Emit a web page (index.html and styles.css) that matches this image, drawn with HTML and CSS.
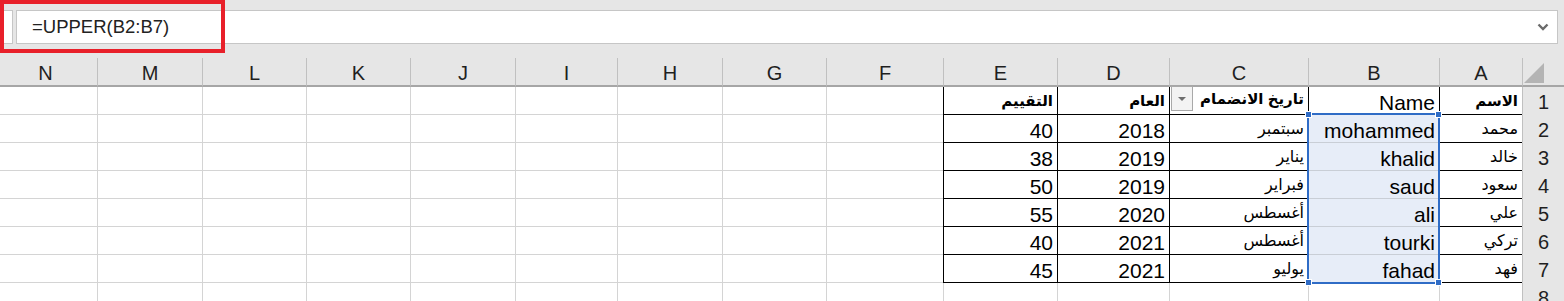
FILE: index.html
```html
<!DOCTYPE html>
<html lang="ar">
<head>
  <meta charset="UTF-8">
  <meta name="viewport" content="width=device-width, initial-scale=1.0">
  <title>UPPER - Excel</title>
  <link rel="stylesheet" href="styles.css">
</head>
<body>
  <div class="formula-bar">
    <div class="name-edge"></div>
    <div class="formula-input">
      <span class="formula-text">=UPPER(B2:B7)</span>
      <svg class="expand" width="12" height="8" viewBox="0 0 12 8"><polyline points="1.5,1.5 6,6 10.5,1.5" fill="none" stroke="#6b6b6b" stroke-width="2.4"/></svg>
    </div>
    <div class="highlight"></div>
  </div>

  <div class="sheet">
    <!-- column headers -->
    <div class="cell col-head corner"><svg width="20" height="20" viewBox="0 0 20 20"><polygon points="20,0 20,20 0,20" fill="#b4b4b4"/></svg></div>
    <div class="cell col-head">A</div>
    <div class="cell col-head">B</div>
    <div class="cell col-head">C</div>
    <div class="cell col-head">D</div>
    <div class="cell col-head">E</div>
    <div class="cell col-head">F</div>
    <div class="cell col-head">G</div>
    <div class="cell col-head">H</div>
    <div class="cell col-head">I</div>
    <div class="cell col-head">J</div>
    <div class="cell col-head">K</div>
    <div class="cell col-head">L</div>
    <div class="cell col-head">M</div>
    <div class="cell col-head">N</div>

    <!-- row 1 -->
    <div class="cell row-head">1</div>
    <div class="cell tb ar bold">الاسم</div>
    <div class="cell tb">Name</div>
    <div class="cell tb ar bold filter-cell">
      <span>تاريخ الانضمام</span>
      <span class="filter-btn"><svg width="8" height="4" viewBox="0 0 8 4"><polygon points="0,0 8,0 4,4" fill="#6e6e6e"/></svg></span>
    </div>
    <div class="cell tb ar bold">العام</div>
    <div class="cell tb ar bold">التقييم</div>
    <div class="cell"></div><div class="cell"></div><div class="cell"></div>
    <div class="cell"></div><div class="cell"></div><div class="cell"></div>
    <div class="cell"></div><div class="cell"></div><div class="cell"></div>

    <!-- row 2 -->
    <div class="cell row-head">2</div>
    <div class="cell tb ar">محمد</div>
    <div class="cell tb sel">mohammed</div>
    <div class="cell tb ar">سبتمبر</div>
    <div class="cell tb">2018</div>
    <div class="cell tb">40</div>
    <div class="cell"></div><div class="cell"></div><div class="cell"></div>
    <div class="cell"></div><div class="cell"></div><div class="cell"></div>
    <div class="cell"></div><div class="cell"></div><div class="cell"></div>

    <!-- row 3 -->
    <div class="cell row-head">3</div>
    <div class="cell tb ar">خالد</div>
    <div class="cell tb sel">khalid</div>
    <div class="cell tb ar">يناير</div>
    <div class="cell tb">2019</div>
    <div class="cell tb">38</div>
    <div class="cell"></div><div class="cell"></div><div class="cell"></div>
    <div class="cell"></div><div class="cell"></div><div class="cell"></div>
    <div class="cell"></div><div class="cell"></div><div class="cell"></div>

    <!-- row 4 -->
    <div class="cell row-head">4</div>
    <div class="cell tb ar">سعود</div>
    <div class="cell tb sel">saud</div>
    <div class="cell tb ar">فبراير</div>
    <div class="cell tb">2019</div>
    <div class="cell tb">50</div>
    <div class="cell"></div><div class="cell"></div><div class="cell"></div>
    <div class="cell"></div><div class="cell"></div><div class="cell"></div>
    <div class="cell"></div><div class="cell"></div><div class="cell"></div>

    <!-- row 5 -->
    <div class="cell row-head">5</div>
    <div class="cell tb ar">علي</div>
    <div class="cell tb sel">ali</div>
    <div class="cell tb ar">أغسطس</div>
    <div class="cell tb">2020</div>
    <div class="cell tb">55</div>
    <div class="cell"></div><div class="cell"></div><div class="cell"></div>
    <div class="cell"></div><div class="cell"></div><div class="cell"></div>
    <div class="cell"></div><div class="cell"></div><div class="cell"></div>

    <!-- row 6 -->
    <div class="cell row-head">6</div>
    <div class="cell tb ar">تركي</div>
    <div class="cell tb sel">tourki</div>
    <div class="cell tb ar">أغسطس</div>
    <div class="cell tb">2021</div>
    <div class="cell tb">40</div>
    <div class="cell"></div><div class="cell"></div><div class="cell"></div>
    <div class="cell"></div><div class="cell"></div><div class="cell"></div>
    <div class="cell"></div><div class="cell"></div><div class="cell"></div>

    <!-- row 7 -->
    <div class="cell row-head">7</div>
    <div class="cell tb ar">فهد</div>
    <div class="cell tb sel">fahad</div>
    <div class="cell tb ar">يوليو</div>
    <div class="cell tb">2021</div>
    <div class="cell tb">45</div>
    <div class="cell"></div><div class="cell"></div><div class="cell"></div>
    <div class="cell"></div><div class="cell"></div><div class="cell"></div>
    <div class="cell"></div><div class="cell"></div><div class="cell"></div>

    <!-- row 8 -->
    <div class="cell row-head">8</div>
    <div class="cell"></div><div class="cell"></div><div class="cell"></div>
    <div class="cell"></div><div class="cell"></div><div class="cell"></div>
    <div class="cell"></div><div class="cell"></div><div class="cell"></div>
    <div class="cell"></div><div class="cell"></div><div class="cell"></div>
    <div class="cell"></div><div class="cell"></div>

    <!-- selected range B2:B7 -->
    <div class="selection">
      <span class="handle tl"></span>
      <span class="handle tr"></span>
      <span class="handle bl"></span>
      <span class="handle br"></span>
    </div>
  </div>
</body>
</html>
```

FILE: styles.css
```css
* {
  box-sizing: border-box;
}

body {
  margin: 0;
  background-color: #fff;
  font-family: "Liberation Sans", "DejaVu Sans", sans-serif;
  overflow: hidden;
}

/* formula bar */
.formula-bar {
  position: relative;
  height: 58px;
  padding: 10px 6px 0 0;
  display: flex;
  align-items: flex-start;
  gap: 3px;
  background-color: #e6e6e6;
}

.name-edge {
  width: 13px;
  height: 34px;
  background: #fff;
  border: 1px solid #c6c6c6;
  border-left: none;
}

.formula-input {
  flex: 1;
  height: 34px;
  background: #fff;
  border: 1px solid #c6c6c6;
  display: flex;
  align-items: center;
  justify-content: space-between;
  padding: 0 8px 0 15px;
}

.formula-text {
  font-size: 18.5px;
  color: #222;
}

.expand {
  display: block;
}

.highlight {
  position: absolute;
  top: 0;
  left: 0;
  width: 225px;
  height: 53px;
  border: 4px solid #e8202a;
}

/* sheet grid (right to left) */
.sheet {
  position: relative;
  direction: rtl;
  display: grid;
  grid-template-columns: 42px 83px 131px 139px 112px 114px 117px 104px 105px 102px 105px 104px 104px 105px 104px;
  grid-template-rows: 29px;
  grid-auto-rows: 28px;
  overflow: hidden;
}

.cell {
  display: flex;
  align-items: flex-end;
  padding: 0 4px;
  border-left: 1px solid #d4d4d4;
  border-bottom: 1px solid #d4d4d4;
  font-size: 21px;
  line-height: 23px;
  white-space: nowrap;
  color: #000;
}

.cell.ar {
  font-size: 16px;
  padding-bottom: 2px;
}

.cell.ar.bold {
  font-size: 15px;
}

.col-head {
  background-color: #e6e6e6;
  border-left-color: #c0c0c0;
  border-bottom: 2px solid #a6a6a6;
  justify-content: center;
  align-items: flex-start;
  padding-top: 4px;
  font-size: 20px;
  color: #1f1f1f;
}

.corner {
  justify-content: flex-start;
  align-items: flex-end;
  padding: 0 20px 2px 0;
}

.corner svg {
  display: block;
}

.row-head {
  background-color: #e6e6e6;
  border-left-color: #c0c0c0;
  border-bottom-color: #e6e6e6;
  justify-content: center;
  font-size: 20px;
  color: #1f1f1f;
}

.tb {
  border-left-color: #000;
  border-bottom-color: #000;
}

.bold {
  font-weight: bold;
}

.sel {
  background-color: #e7edf8;
  border-bottom-color: #c9ced6;
}

.filter-cell {
  justify-content: space-between;
  padding-left: 1px;
  padding-bottom: 0;
}

.filter-cell > span:first-child {
  margin-bottom: 2px;
}

.filter-btn {
  flex-shrink: 0;
  width: 22px;
  height: 25px;
  margin-bottom: 1px;
  display: flex;
  align-items: center;
  justify-content: center;
  background: #f3f3f3;
  border: 1px solid #a9a9a9;
}

/* selection outline */
.selection {
  position: absolute;
  grid-column: 3 / 4;
  grid-row: 3 / 9;
  top: -2px;
  right: -1px;
  bottom: -1px;
  left: -1px;
  border: 2px solid #2f6cc6;
  pointer-events: none;
}

.handle {
  position: absolute;
  width: 7px;
  height: 7px;
  background: #2f6cc6;
  border: 1px solid #fff;
}

.handle.tl { top: -4px; left: -4px; }
.handle.tr { top: -4px; right: -4px; }
.handle.bl { bottom: -4px; left: -4px; }
.handle.br { bottom: -4px; right: -4px; }
```
